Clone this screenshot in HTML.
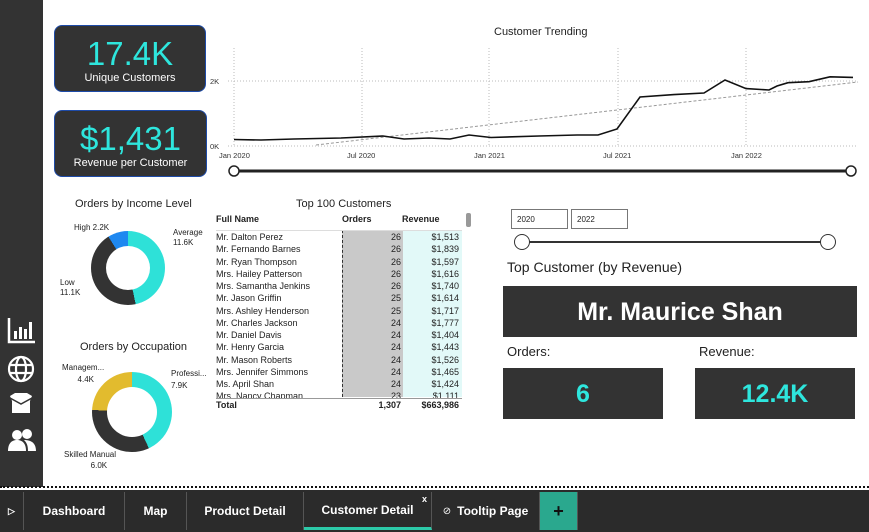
<!DOCTYPE html>
<html><head><meta charset="utf-8"><style>
*{margin:0;padding:0;box-sizing:border-box}
body{width:869px;height:532px;overflow:hidden;background:#fff;font-family:"Liberation Sans",sans-serif;position:relative;color:#222}
.a{position:absolute}
.side{left:0;top:0;width:43px;height:487px;background:#333}
.card{background:#333;border:1px solid #1e4ba8;border-radius:8px;text-align:center;color:#fff}
.big{color:#2ee6dd;font-size:33px;line-height:36px}
.lbl{font-size:11px;line-height:13px}
.donut{border-radius:50%}
.t{font-size:11px}
.tab{top:492px;height:38px;color:#fff;font-size:12px;font-weight:bold;display:flex;align-items:center;justify-content:center;border-right:1px solid #555}
.dk{background:#333;color:#fff}
</style></head><body>
<div class="a side"></div>
<svg class="a" style="left:6px;top:316px" width="32" height="140" viewBox="0 0 32 140" fill="#fff">
<path d="M3 2v24h26" stroke="#fff" stroke-width="2.5" fill="none"/>
<rect x="8" y="15" width="3" height="8"/><rect x="13" y="11" width="3" height="12"/><rect x="18" y="13" width="3" height="10"/><rect x="23" y="6" width="3" height="17"/>
<g stroke="#fff" stroke-width="2.2" fill="none"><circle cx="15" cy="53" r="12"/><ellipse cx="15" cy="53" rx="5" ry="12"/><path d="M3 49h24M3 57h24"/></g>
<path d="M4 80l5 -3h12l5 3 -2 5v12H6V85z"/><path d="M4 82l11 6 11-6" stroke="#333" stroke-width="1.5" fill="none"/>
<circle cx="11" cy="119" r="5"/><circle cx="21" cy="118" r="5"/><path d="M2 135c0-8 4-11 9-11s9 3 9 11z"/><path d="M18 124c6 0 12 2 12 11h-8c0-5-1-8-4-11z"/>
</svg>
<div class="a card" style="left:54px;top:25px;width:152px;height:67px"><div class="big" style="margin-top:10px">17.4K</div><div class="lbl">Unique Customers</div></div>
<div class="a card" style="left:54px;top:110px;width:153px;height:67px"><div class="big" style="margin-top:10px">$1,431</div><div class="lbl">Revenue per Customer</div></div>
<div class="a t" style="left:494px;top:26px">Customer Trending</div>
<svg class="a" style="left:205px;top:40px" width="664" height="145" viewBox="205 40 664 145">
<g stroke="#bbb" stroke-dasharray="1,2" stroke-width="1"><path d="M234 48v98M362 48v98M489 48v98M618 48v98M746 48v98M228 81h630M228 146h630"/></g>
<g font-size="7.5" fill="#333" font-family="Liberation Sans"><text x="210" y="84">2K</text><text x="210" y="149">0K</text><text x="219" y="158">Jan 2020</text><text x="347" y="158">Jul 2020</text><text x="474" y="158">Jan 2021</text><text x="603" y="158">Jul 2021</text><text x="731" y="158">Jan 2022</text></g>
<path d="M316 145L858 82" stroke="#999" stroke-dasharray="3,2" fill="none"/>
<polyline fill="none" stroke="#111" stroke-width="1.6" points="234,139.5 261,140 294,139 341,138 383,136 404,139 429,138 450,139 469,135 491,137.5 539,136 577,135 598,135 617,129 640,97 674,94.6 704,93 725,80 746,88.6 769,90 777,86 788,82.7 809,81.7 830,76.8 853,77.4"/>
<path d="M234 171H851" stroke="#222" stroke-width="3"/>
<circle cx="234" cy="171" r="5" fill="#fff" stroke="#222" stroke-width="1.5"/><circle cx="851" cy="171" r="5" fill="#fff" stroke="#222" stroke-width="1.5"/>
</svg>
<div class="a t" style="left:75px;top:198px">Orders by Income Level</div>
<div class="a donut" style="left:91px;top:231px;width:74px;height:74px;background:conic-gradient(#2ee1d8 0 168deg,#333 168deg 328deg,#1e88f0 328deg 360deg)"></div>
<div class="a donut" style="left:106px;top:246px;width:44px;height:44px;background:#fff"></div>
<div class="a" style="left:74px;top:223px;font-size:8px">High 2.2K</div>
<div class="a" style="left:173px;top:228px;font-size:8px;line-height:10px">Average<br>11.6K</div>
<div class="a" style="left:60px;top:278px;font-size:8px;line-height:10px">Low<br>11.1K</div>
<div class="a t" style="left:80px;top:341px">Orders by Occupation</div>
<div class="a donut" style="left:92px;top:372px;width:80px;height:80px;background:conic-gradient(#2ee1d8 0 155deg,#333 155deg 273deg,#e2bb2e 273deg 360deg)"></div>
<div class="a donut" style="left:107px;top:387px;width:50px;height:50px;background:#fff"></div>
<div class="a" style="left:62px;top:362px;font-size:8px;line-height:12px">Managem...<br>&nbsp;&nbsp;&nbsp;&nbsp;&nbsp;&nbsp;&nbsp;4.4K</div>
<div class="a" style="left:171px;top:368px;font-size:8px;line-height:12px">Professi...<br>7.9K</div>
<div class="a" style="left:64px;top:449px;font-size:8px;line-height:11px">Skilled Manual<br>&nbsp;&nbsp;&nbsp;&nbsp;&nbsp;&nbsp;&nbsp;&nbsp;&nbsp;&nbsp;&nbsp;&nbsp;6.0K</div>
<div class="a t" style="left:296px;top:198px">Top 100 Customers</div>
<div class="a" style="left:466px;top:213px;width:5px;height:14px;background:#999;border-radius:2px"></div>
<div class="a" style="left:342px;top:230px;width:61px;height:167px;background:#c9c9c9;border-left:1px dashed #333"></div>
<div class="a" style="left:403px;top:230px;width:59px;height:167px;background:#e2f9f8"></div>
<div class="a" style="left:216px;top:213px;width:246px;font-size:9px;line-height:12.25px">
<div style="display:flex;font-weight:bold;height:18px;line-height:13px;border-bottom:1px solid #ddd"><span style="width:126px">Full Name</span><span style="width:60px">Orders</span><span>Revenue</span></div>
<div style="height:167px;overflow:hidden;margin-top:0px">
<div style="display:flex"><span style="width:126px">Mr. Dalton Perez</span><span style="width:59px;text-align:right">26</span><span style="width:58px;text-align:right">$1,513</span></div>
<div style="display:flex"><span style="width:126px">Mr. Fernando Barnes</span><span style="width:59px;text-align:right">26</span><span style="width:58px;text-align:right">$1,839</span></div>
<div style="display:flex"><span style="width:126px">Mr. Ryan Thompson</span><span style="width:59px;text-align:right">26</span><span style="width:58px;text-align:right">$1,597</span></div>
<div style="display:flex"><span style="width:126px">Mrs. Hailey Patterson</span><span style="width:59px;text-align:right">26</span><span style="width:58px;text-align:right">$1,616</span></div>
<div style="display:flex"><span style="width:126px">Mrs. Samantha Jenkins</span><span style="width:59px;text-align:right">26</span><span style="width:58px;text-align:right">$1,740</span></div>
<div style="display:flex"><span style="width:126px">Mr. Jason Griffin</span><span style="width:59px;text-align:right">25</span><span style="width:58px;text-align:right">$1,614</span></div>
<div style="display:flex"><span style="width:126px">Mrs. Ashley Henderson</span><span style="width:59px;text-align:right">25</span><span style="width:58px;text-align:right">$1,717</span></div>
<div style="display:flex"><span style="width:126px">Mr. Charles Jackson</span><span style="width:59px;text-align:right">24</span><span style="width:58px;text-align:right">$1,777</span></div>
<div style="display:flex"><span style="width:126px">Mr. Daniel Davis</span><span style="width:59px;text-align:right">24</span><span style="width:58px;text-align:right">$1,404</span></div>
<div style="display:flex"><span style="width:126px">Mr. Henry Garcia</span><span style="width:59px;text-align:right">24</span><span style="width:58px;text-align:right">$1,443</span></div>
<div style="display:flex"><span style="width:126px">Mr. Mason Roberts</span><span style="width:59px;text-align:right">24</span><span style="width:58px;text-align:right">$1,526</span></div>
<div style="display:flex"><span style="width:126px">Mrs. Jennifer Simmons</span><span style="width:59px;text-align:right">24</span><span style="width:58px;text-align:right">$1,465</span></div>
<div style="display:flex"><span style="width:126px">Ms. April Shan</span><span style="width:59px;text-align:right">24</span><span style="width:58px;text-align:right">$1,424</span></div>
<div style="display:flex"><span style="width:126px">Mrs. Nancy Chapman</span><span style="width:59px;text-align:right">23</span><span style="width:58px;text-align:right">$1,111</span></div>
</div>
<div style="display:flex;font-weight:bold;border-top:1px solid #999;background:#fff"><span style="width:126px">Total</span><span style="width:59px;text-align:right">1,307</span><span style="width:58px;text-align:right">$663,986</span></div>
</div>
<div class="a" style="left:511px;top:209px;width:57px;height:20px;border:1px solid #777;font-size:8px;padding:5px 5px">2020</div>
<div class="a" style="left:571px;top:209px;width:57px;height:20px;border:1px solid #777;font-size:8px;padding:5px 5px">2022</div>
<div class="a" style="left:522px;top:241px;width:306px;height:2px;background:#333"></div>
<div class="a" style="left:514px;top:234px;width:16px;height:16px;border-radius:50%;border:1.5px solid #333;background:#fff"></div>
<div class="a" style="left:820px;top:234px;width:16px;height:16px;border-radius:50%;border:1.5px solid #333;background:#fff"></div>
<div class="a" style="left:507px;top:259px;font-size:14px">Top Customer (by Revenue)</div>
<div class="a dk" style="left:503px;top:286px;width:354px;height:51px;font-size:25px;font-weight:bold;text-align:center;line-height:52px">Mr. Maurice Shan</div>
<div class="a" style="left:507px;top:344px;font-size:13px">Orders:</div>
<div class="a" style="left:699px;top:344px;font-size:13px">Revenue:</div>
<div class="a dk" style="left:503px;top:368px;width:160px;height:51px;color:#2ee6dd;font-size:25px;font-weight:bold;text-align:center;line-height:52px">6</div>
<div class="a dk" style="left:695px;top:368px;width:160px;height:51px;color:#2ee6dd;font-size:25px;font-weight:bold;text-align:center;line-height:52px">12.4K</div>
<div class="a" style="left:0;top:486px;width:869px;border-top:2px dotted #111"></div>
<div class="a" style="left:0;top:490px;width:869px;height:42px;background:#2b2b2b"></div>
<div class="a tab" style="left:0;width:24px;font-size:9px">▷</div>
<div class="a tab" style="left:24px;width:101px">Dashboard</div>
<div class="a tab" style="left:125px;width:62px">Map</div>
<div class="a tab" style="left:187px;width:117px">Product Detail</div>
<div class="a tab" style="left:304px;width:128px;border-bottom:3px solid #2cc9a8">Customer Detail<span class="a" style="right:4px;top:2px;font-size:9px">x</span></div>
<div class="a tab" style="left:432px;width:108px"><span style="font-size:10px;margin-right:6px;font-weight:normal">⊘</span>Tooltip Page</div>
<div class="a tab" style="left:540px;width:38px;background:#2aa88e;color:#111;font-size:18px">+</div>
</body></html>
